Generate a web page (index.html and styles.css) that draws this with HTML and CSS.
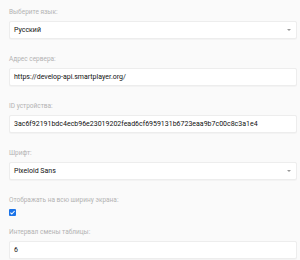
FILE: index.html
```html
<!DOCTYPE html>
<html lang="ru">
<head>
<meta charset="utf-8">
<link rel="stylesheet" href="styles.css">
</head>
<body>
<div class="form">
  <div class="group">
    <div class="label">Выберите язык:</div>
    <div class="field select"><span>Русский</span><span class="arrow"></span></div>
  </div>
  <div class="group">
    <div class="label">Адрес сервера:</div>
    <div class="field"><span>https://develop-api.smartplayer.org/</span></div>
  </div>
  <div class="group">
    <div class="label">ID устройства:</div>
    <div class="field"><span>3ac6f92191bdc4ecb96e23019202fead6cf6959131b6723eaa9b7c00c8c3a1e4</span></div>
  </div>
  <div class="group">
    <div class="label">Шрифт:</div>
    <div class="field select"><span>Pixeloid Sans</span><span class="arrow"></span></div>
  </div>
  <div class="group check-group">
    <div class="label">Отображать на всю ширину экрана:</div>
    <span class="checkbox"><svg viewBox="0 0 8 8" width="7" height="7"><path d="M1.6 4.1 L3.2 5.7 L6.4 2.3" fill="none" stroke="#fff" stroke-width="1.2"/></svg></span>
  </div>
  <div class="group">
    <div class="label">Интервал смены таблицы:</div>
    <div class="field"><span>6</span></div>
  </div>
</div>
</body>
</html>
```
FILE: styles.css
```css
html, body {
  margin: 0;
  padding: 0;
  background: #fafafa;
}
body {
  font-family: Roboto, "Liberation Sans", Arial, sans-serif;
}
.form {
  padding: 7px 3px 0 9px;
  display: flex;
  flex-direction: column;
}
.group {
  display: flex;
  flex-direction: column;
  margin-bottom: 15px;
}
.check-group {
  margin-bottom: 11px;
}
.label {
  font-size: 6.5px;
  line-height: 10px;
  color: #b3b3b3;
  margin-bottom: 4px;
}
.field {
  height: 18px;
  box-sizing: border-box;
  background: #fff;
  border: 1px solid #ededed;
  border-radius: 2px;
  box-shadow: 0 0.5px 1px rgba(0, 0, 0, 0.03);
  padding: 0 4px;
  display: flex;
  align-items: center;
  justify-content: space-between;
  font-size: 7px;
  color: #111;
  white-space: nowrap;
  overflow: hidden;
}
.arrow {
  width: 0;
  height: 0;
  border-left: 2.5px solid transparent;
  border-right: 2.5px solid transparent;
  border-top: 2.5px solid #999;
  margin-right: 1px;
}
.checkbox {
  width: 7px;
  height: 7px;
  background: #1a73e8;
  border-radius: 1px;
  display: flex;
}
```
